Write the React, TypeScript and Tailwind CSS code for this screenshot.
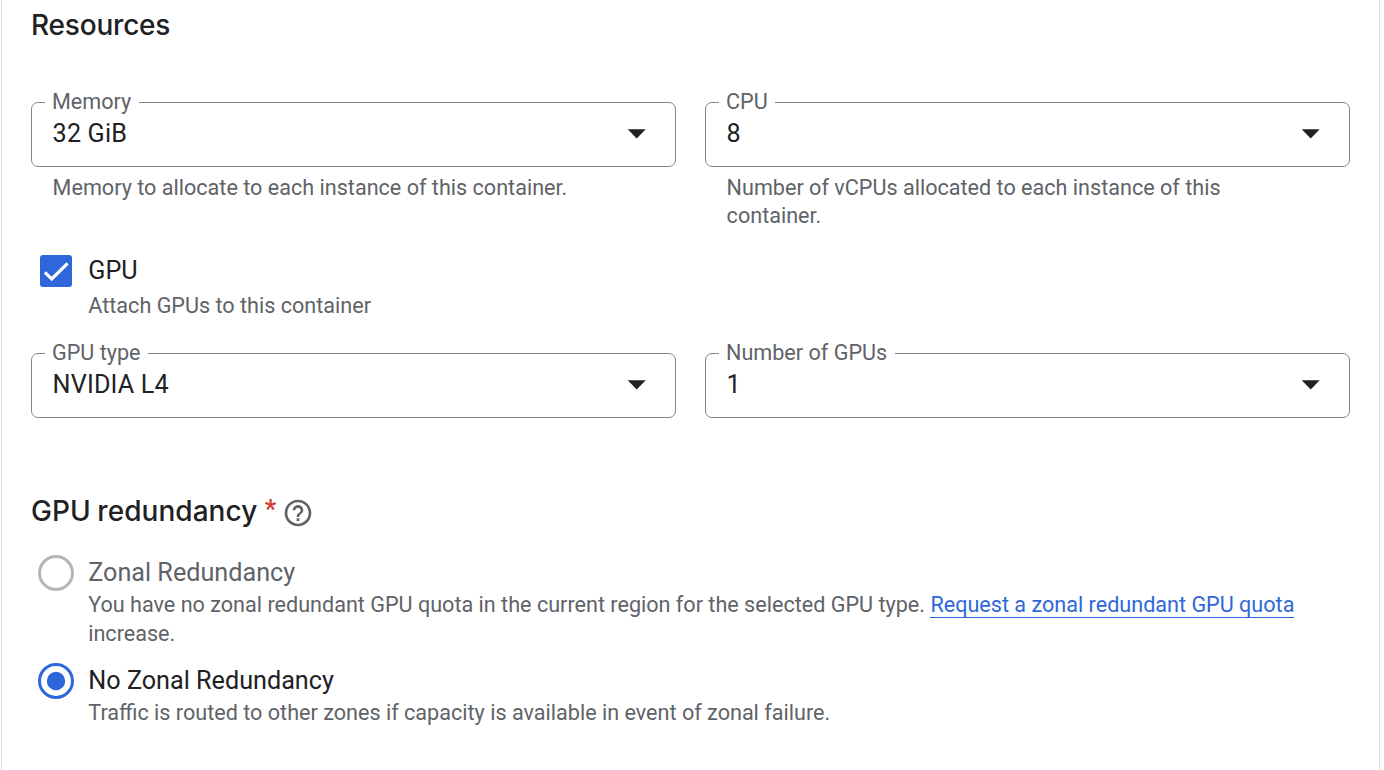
import { ReactNode } from "react";

function Select({ label, value }: { label: string; value: string }) {
  return (
    <div className="relative flex h-[65px] w-[645px] items-start justify-between rounded-[7px] border border-[#80868b] pl-[20.6px] pr-[29px]">
      <span className="absolute -top-[15.5px] left-[13px] bg-white pl-[7px] pr-[7.5px] text-[21.6px] leading-7 text-[#5f6368]">
        {label}
      </span>
      <span className="pt-[15px] text-[25.2px] leading-8 tracking-[0.15px] text-[#202124]">{value}</span>
      <svg className="mt-[26px]" width="19" height="10" viewBox="0 0 19 10" fill="#202124">
        <path d="M0.7 0.2h18l-9 9.2z" />
      </svg>
    </div>
  );
}

function Hint({ children }: { children: ReactNode }) {
  return <p className="text-[21.6px] leading-7 text-[#5f6368]">{children}</p>;
}

export default function App() {
  return (
    <main className="flex h-[770px] w-[1384px] overflow-hidden bg-white pl-px font-['Roboto',sans-serif]">
      <section className="w-[1379px] border-x border-[#dadce0] pl-[29px]">
        <h2 className="mt-[9px] font-['Inter',sans-serif] text-[28px] font-medium leading-8 tracking-[-0.2px] text-[#202124]">
          Resources
        </h2>
        <div className="mt-[61px] flex h-[127px] gap-[29px]">
          <div>
            <Select label="Memory" value="32 GiB" />
            <div className="mt-[7px] pl-[21.6px]">
              <Hint>Memory to allocate to each instance of this container.</Hint>
            </div>
          </div>
          <div>
            <Select label="CPU" value="8" />
            <div className="mt-[7px] w-[570px] pl-[21.6px]">
              <Hint>Number of vCPUs allocated to each instance of this container.</Hint>
            </div>
          </div>
        </div>
        <div className="mt-[26px] flex h-[98px] pl-[9px]">
          <svg width="32" height="32" viewBox="0 0 32 32">
            <rect width="32" height="32" rx="3" fill="#2e67da" />
            <path d="M4.9 17.3l6.8 6.7L27.6 8.3" fill="none" stroke="white" strokeWidth="3.2" />
          </svg>
          <div className="pl-[16.3px]">
            <div className="text-[25.2px] leading-8 text-[#202124]">GPU</div>
            <div className="mt-[5px]">
              <Hint>Attach GPUs to this container</Hint>
            </div>
          </div>
        </div>
        <div className="flex gap-[29px]">
          <Select label="GPU type" value="NVIDIA L4" />
          <Select label="Number of GPUs" value="1" />
        </div>
        <h2 className="mt-[77px] flex h-8 font-['Inter',sans-serif] text-[28px] font-medium leading-8 text-[#202124]">
          <span className="tracking-[0.05px] [word-spacing:-1px]">GPU redundancy</span>
          <span className="ml-[7.5px] w-[12px] font-['Roboto',sans-serif] text-[25.2px] font-bold leading-[30px] text-[#d23f31]">*</span>
          <svg className="ml-[5.3px] mt-[2px] shrink-0" width="32" height="32" viewBox="0 0 24 24" fill="#5f6368">
            <path d="M11 18h2v-2h-2v2zm1-16C6.48 2 2 6.48 2 12s4.48 10 10 10 10-4.48 10-10S17.52 2 12 2zm0 18c-4.41 0-8-3.59-8-8s3.59-8 8-8 8 3.59 8 8-3.59 8-8 8zm0-14c-2.21 0-4 1.79-4 4h2c0-1.1.9-2 2-2s2 .9 2 2c0 2-3 1.75-3 5h2c0-2.25 3-2.5 3-5 0-2.21-1.79-4-4-4z" />
          </svg>
        </h2>
        <div className="mt-7 flex h-[108px] pl-[7px]">
          <svg width="36" height="36" viewBox="0 0 36 36">
            <circle cx="18" cy="18" r="16.5" fill="none" stroke="#b5b5b5" strokeWidth="3" />
          </svg>
          <div className="pl-[14.2px] pt-[2px]">
            <div className="text-[25.2px] leading-8 text-[#5f6368]">Zonal Redundancy</div>
            <div className="mt-[2px] w-[1240px]">
              <Hint>
                You have no zonal redundant GPU quota in the current region for the selected GPU type.{" "}
                <a className="border-b border-[#2e67da] text-[#2e67da]">Request a zonal redundant GPU quota</a>
              </Hint>
              <div className="mt-px">
                <Hint>increase.</Hint>
              </div>
            </div>
          </div>
        </div>
        <div className="flex pl-[7px]">
          <svg width="36" height="36" viewBox="0 0 36 36">
            <circle cx="18" cy="18" r="16.5" fill="none" stroke="#2e67da" strokeWidth="3" />
            <circle cx="18" cy="18" r="9.2" fill="#2e67da" />
          </svg>
          <div className="pl-[14.3px] pt-[2px]">
            <div className="text-[25.2px] leading-8 text-[#202124]">No Zonal Redundancy</div>
            <div className="mt-[2px]">
              <Hint>Traffic is routed to other zones if capacity is available in event of zonal failure.</Hint>
            </div>
          </div>
        </div>
      </section>
    </main>
  );
}
